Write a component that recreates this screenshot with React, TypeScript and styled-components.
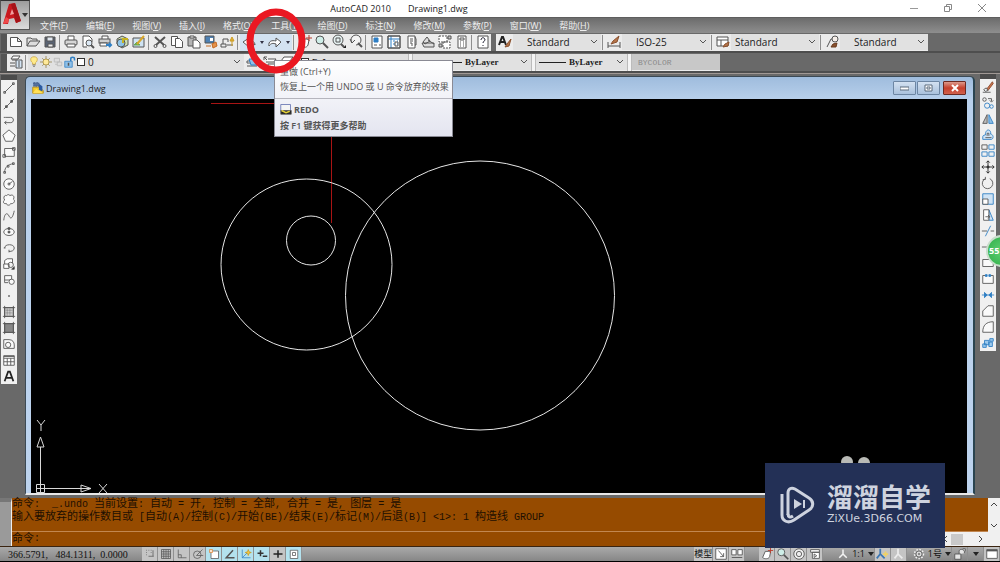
import React, { Fragment, ReactNode } from "react";
import styled, { createGlobalStyle, css } from "styled-components";

const UI_FONT = `"Open Sans", "Noto Sans CJK SC", sans-serif`;
const MONO_FONT = `"Liberation Mono", "Noto Sans CJK SC", monospace`;

const GlobalStyle = createGlobalStyle`
  *, *::before, *::after { box-sizing: border-box; }
  body { margin: 0; background: #000; font-family: ${UI_FONT}; }
  button, select, input { font-family: inherit; margin: 0; padding: 0; border: 0; border-radius: 0; }
  svg { display: block; }
`;

/* ---------- icons ---------- */

const K = "#555";
const B = "#2f7fc4";

const icons: Record<string, ReactNode> = {
  new: <path d="M2.5 3.500h7l4 4v5h-11zM9.500 3.500v4h4" fill="#fff" />,
  open: <path d="M2 12V4h4l1 1h5v2M2 12l3-5h10l-4 5z" fill="#ddd" />,
  save: (
    <>
      <path d="M3 3h10v10H3z" fill="#5a6474" />
      <path d="M5 3h6v4H5z" fill="#dfe6ee" />
      <path d="M6 10h5v3H6z" fill="#eee" />
    </>
  ),
  print: (
    <>
      <path d="M5 6V2h6v4" fill="#fff" />
      <rect x="2" y="6" width="12" height="5" rx="1" fill="#d5d5d5" />
      <path d="M4 10h8v3H4z" fill="#fff" />
    </>
  ),
  preview: (
    <>
      <path d="M3 13V2h6l3 3v3M3 13h4" fill="#fff" />
      <circle cx="9" cy="9" r="3" fill="#dce9f5" />
      <path d="M11 11l3 3" strokeWidth="2" />
    </>
  ),
  publish: (
    <>
      <path d="M5 5V2h6v3" fill="#fff" />
      <rect x="2" y="5" width="11" height="4" fill="#cfcfcf" />
      <path d="M3 9h7v3H3z" fill="#fff" />
      <path d="M9 11h5M12 9l2 2-2 2" stroke={B} strokeWidth="2" />
    </>
  ),
  globe: (
    <>
      <path d="M8 2l6 3v6l-6 3-5-4V5z" fill="#cfe0b0" />
      <circle cx="7" cy="9" r="4" fill="#8fc3e6" />
      <path d="M8 5l6 0M9 5v4" stroke="#c6b21e" strokeWidth="2" />
    </>
  ),
  markup: (
    <>
      <path d="M2 4h11v9H2z" fill="#cfe3f3" />
      <path d="M3 11l3-3 3 3z" fill="#6aa84f" stroke="#6aa84f" />
      <path d="M6 10l7-8" stroke="#d9a72b" strokeWidth="2" />
    </>
  ),
  cut: (
    <>
      <path d="M3 3l9 8M13 3l-9 8" strokeWidth="2" />
      <circle cx="3.5" cy="12" r="1.5" />
      <circle cx="12.5" cy="12" r="1.5" />
    </>
  ),
  copy: (
    <>
      <path d="M2.500 2.500h6v9h-6z" fill="#fff" />
      <path d="M6.500 4.500h4l3 3v6h-7z" fill="#fff" />
    </>
  ),
  paste: (
    <>
      <path d="M2 3h8v9H2z" fill="#b4b4b4" />
      <path d="M4 2h4v2H4z" fill="#fff" />
      <path d="M7 6h4l3 3v5H7z" fill="#fff" />
    </>
  ),
  match: (
    <>
      <path d="M2 2h9v7H2z" fill="#4d81b4" />
      <path d="M7 4h3v3H7z" fill="#fff" stroke="none" />
      <path d="M3 12h5M9 10l4-2 1 4-4 2z" fill="#e5934a" stroke="#c56a21" />
    </>
  ),
  block: (
    <>
      <path d="M3 5h5v3M3 5v5M1 10h5v3H1zM7 11h6" />
      <path d="M12 12V5M10 7l2-4 2 4z" fill="#f3c64b" stroke="#cc9a1e" />
    </>
  ),
  undo: <path d="M14 11c0-3-3-5-6-4V4L2 8l6 5v-3c3-1 5 0 6 1z" fill="#fff" />,
  redo: <path d="M2 12c-1-5 3-6 7-5V4l5 4-5 5v-3c-3-1-5-1-7 2z" fill="#fff" />,
  pan: (
    <>
      <path d="M3 12c2 2 7 2 8-1l1-5-2-1-4 0z" fill="#fff" />
      <path d="M12 1v6M9 4h6" stroke="#b83a2a" />
    </>
  ),
  zoom: (
    <>
      <circle cx="6" cy="6" r="4" fill="#cfeee8" />
      <path d="M9 9l5 5" strokeWidth="2" />
    </>
  ),
  zoomWin: (
    <>
      <circle cx="7" cy="6" r="5" fill="#e6f2f2" />
      <path d="M5 4h4v4H5z" />
      <path d="M10 10l3 3" strokeWidth="2" />
      <path d="M12 14h3v-3z" fill="#222" stroke="none" />
    </>
  ),
  zoomPrev: (
    <>
      <path d="M4 9a5 5 0 1 1 4 2M2 5l2 4 3-3" fill="#f4f4f4" />
      <path d="M10 9l4 4" strokeWidth="2" />
    </>
  ),
  props: (
    <>
      <path d="M3 2h10v12H3z" fill="#fff" />
      <path d="M5 4h4v4H5z" fill={B} stroke={B} />
      <path d="M5 11h3M10 11h2" />
    </>
  ),
  center: (
    <>
      <path d="M2 2h12v12H2z" fill="#fff" />
      <path d="M5 2v12M2 5h12M7 7h2M11 7h1M7 10h2M11 10h1" stroke={B} />
      <path d="M2 2h12v12H2zM9 8h3v4H9z" />
    </>
  ),
  palette: <path d="M5 2h7v12H5zM12 3l1 2v6h-1M7 5h3M7 7h3M7 9h2v3" fill="#fff" />,
  sheet: <path d="M3 8l4-5 3 4-5 3zM2 9h12v4H4zM8 6l6 4" fill="#ddd" />,
  markset: (
    <>
      <path d="M2 2h8v6H2zM6 8h7v6H6z" strokeDasharray="2 1" fill="#fff" />
      <path d="M11 2h3v3h-3zM2 10h3v3H2z" fill="#c9c9c9" />
    </>
  ),
  calc: <path d="M4 2h8v12H4zM6 4h4v2H6zM6 8h1M9 8h1M6 10h1M9 10h1M6 12h1M9 12h1" fill="#fff" />,
  help: (
    <>
      <path d="M3 2h10v12H3z" fill="#fff" />
      <path d="M6 6c0-3 4-3 4 0 0 1-2 1-2 3M8 11v1" stroke="#223" />
    </>
  ),
  textStyle: (
    <>
      <path d="M2 11L5 3h1l3 8M3 8h5" stroke="#222" strokeWidth="2" />
      <path d="M8 13l2-3 4-5-2 7z" fill="#b6754a" stroke="#8a5230" />
    </>
  ),
  dimStyle: (
    <>
      <path d="M2 8v6M14 8v6M2 12h12" />
      <path d="M5 10l2-3 6-5-2 6z" fill="#b6754a" stroke="#8a5230" />
    </>
  ),
  tableStyle: (
    <>
      <path d="M2 3h11v9H2zM2 6h11M6 6v6" fill="#fff" />
      <path d="M8 13l2-3 4-2-1 4z" fill="#b6754a" stroke="#8a5230" />
    </>
  ),
  leaderStyle: (
    <>
      <path d="M3 13l4-8h3" />
      <circle cx="11" cy="5" r="3" fill="#f5eee8" />
      <path d="M7 13l2-3 4-1-1 4z" fill="#8a5230" stroke="#6b3d20" />
    </>
  ),
  layers: (
    <>
      <path d="M5 2h7l-2 3H3zM4 6h4M2 9h5M2 12h5" fill="#fff" />
      <path d="M8 6h6v8H8zM10 8h2M10 10h2M10 12h2" fill="#d5e5f4" />
    </>
  ),
  bulb: (
    <>
      <path d="M8 1c-6 0-5 6-2 8v2h4V9c3-2 4-8-2-8z" fill="#ffeb8a" stroke="#c9a440" />
      <path d="M6 12h4M7 14h2" />
    </>
  ),
  sun: (
    <>
      <path d="M8 0v16M0 8h16M3 3l10 10M13 3L3 13" stroke="#8e7b45" />
      <circle cx="8" cy="8" r="4" fill="#ffe99a" stroke="#a68c3b" />
    </>
  ),
  freeze: <path d="M3 3h7v5H3zM7 8h6v5H7zM4 11h3" stroke="#b5b5b5" fill="#ddd" />,
  lock: (
    <>
      <path d="M9 7V4c0-3 5-3 5 0v2" stroke={B} strokeWidth="2" />
      <path d="M1 7h10v8H1z" fill="#8fc0e8" stroke={B} />
      <path d="M6 9v4" strokeWidth="2" />
    </>
  ),
  layerPrev: (
    <>
      <path d="M2 7h9v2H2zM2 12h10" fill="#fff" />
      <path d="M4 5h9v6H6z" fill="#8fc0e8" stroke={B} />
    </>
  ),
  layerState: <path d="M2 3l3 3M2 6V3h3M6 5h8l-2 3H4M6 10h8v3H6z" fill="#fff" />,
  layerIso: <path d="M5 3h9l-3 4H2zM3 10h7l3-4M3 13h7l4-5" fill="#fff" />,

  line: <path d="M3 13L13 3M2 12h2v2H2zM12 2h2v2h-2z" />,
  xline: <path d="M2 14L14 2M4 10h2v2H4zM10 4h2v2h-2z" fill={K} />,
  pline: <path d="M2 5h2M4 5h6c4 0 4 6 0 6H3M5 9l-2 2 2 2" />,
  polygon: <path d="M8 1l7 6-3 7H4L1 7z" fill="#fafafa" />,
  rect: <path d="M3 4h11v9H3zM1 11h3v3H1zM12 3h3v3h-3z" fill="#fafafa" />,
  arc: <path d="M3 13c0-6 4-9 10-10M2 12h2v2H2zM6 5h2v2H6zM12 2h2v2h-2z" />,
  circle: (
    <>
      <circle cx="8" cy="8" r="6" fill="#fafafa" />
      <path d="M8 8l4-3M7 7h2v2H7z" />
    </>
  ),
  cloud: <path d="M5 3c2-2 4-1 4 0 3-2 6 1 4 4 3 2 0 6-3 5-1 3-5 2-5 0-4 1-4-3-2-4-2-3 0-6 2-5z" fill="#fafafa" />,
  spline: <path d="M2 13c1-9 4-9 6-5s4 3 6-6" />,
  ellipse: (
    <>
      <ellipse cx="8" cy="8" rx="6" ry="4" fill="#fafafa" />
      <path d="M7 7h2v2H7zM7 3h2v2H7z" fill={K} />
    </>
  ),
  ellArc: <path d="M3 8c0-5 11-5 11 0 0 3-3 4-6 4M8 10v3M2 8h2" />,
  insert: (
    <>
      <path d="M3 8V4l3-2h6v5M2 8h6v5H2z" fill="#fff" />
      <circle cx="10" cy="9" r="3" />
      <path d="M11 14h3v-3z" fill="#222" />
    </>
  ),
  makeBlock: (
    <>
      <path d="M3 3h8v5H3zM3 8v3h4" fill="#fafafa" />
      <circle cx="11" cy="10" r="3" fill="#fafafa" />
    </>
  ),
  point: <path d="M7 8h2M8 7v2" />,
  hatch: (
    <>
      <path d="M3 3h10v10H3z" fill="#ccc" />
      <path d="M1 3h14M1 13h14M3 1v14M13 1v14" />
      <path d="M4 6h8M4 9h8M6 4v8M9 4v8" strokeOpacity=".4" />
    </>
  ),
  gradient: (
    <>
      <path d="M3 3h10v10H3z" fill="#888" />
      <path d="M1 3h14M1 13h14M3 1v14M13 1v14" />
    </>
  ),
  region: (
    <>
      <path d="M2 13V3h6c4 0 6 3 6 6v4z" fill="#fafafa" />
      <circle cx="7" cy="9" r="3" />
    </>
  ),
  table: <path d="M2 3h12v11H2zM2 6h12M2 10h12M6 6v8M10 6v8M2 4h12" fill="#fff" />,
  mtext: <path d="M3 14L7 3h2l4 11M5 10h6" stroke="#222" strokeWidth="2" />,

  erase: (
    <>
      <path d="M6 11l7-9 1 2-6 8z" fill="#c9714a" stroke="#8a4a2e" />
      <path d="M3 11l3-2 2 3-3 1zM2 14h9" fill="#eee" />
    </>
  ),
  copyObj: (
    <>
      <circle cx="4" cy="4" r="2" />
      <path d="M8 3h4v3M10 5l2 2 2-2" />
      <circle cx="7" cy="11" r="3" stroke={B} />
      <circle cx="12" cy="12" r="2" stroke={B} />
    </>
  ),
  mirror: (
    <>
      <path d="M7 3v10H2z" fill="#bbb" />
      <path d="M9 3v10h5z" fill="#8fc0e8" stroke={B} />
    </>
  ),
  offset: (
    <>
      <path d="M2 13v-3c0-2 3-2 3-2 0-8 7-7 6-1 3 0 4 5 1 6z" stroke={B} fill="#cfe3f5" />
      <path d="M5 11h7M7 9V6h2v3" />
    </>
  ),
  array: (
    <>
      <path d="M1 1h6v5H1z" />
      <path d="M9 1h6v5H9zM1 9h6v5H1zM9 9h6v5H9z" stroke={B} />
    </>
  ),
  move: <path d="M8 1v14M1 8h14M6 3l2-2 2 2M6 13l2 2 2-2M3 6L1 8l2 2M13 6l2 2-2 2M7 7h2v2H7z" stroke="#222" />,
  rotate: <path d="M5 3a6 6 0 1 0 5 0M5 1v3H2" />,
  scale: (
    <>
      <path d="M2 2h12v12H2z" stroke={B} fill="#cfe3f5" />
      <path d="M2 8h6v6H2z" fill="#fff" />
    </>
  ),
  stretch: (
    <>
      <path d="M9 2l5 12H9z" stroke={B} fill="#cfe3f5" />
      <path d="M3 2h6v12H3zM5 10h5M8 8l2 2-2 2" fill="#fff" />
    </>
  ),
  trim: (
    <>
      <path d="M1 8h6M11 8h4" />
      <path d="M5 14L11 2" stroke={B} />
    </>
  ),
  extend: <path d="M1 8h10M13 2v12" />,
  breakPt: <path d="M2 4h12v8H2z" fill="#fafafa" />,
  breakObj: (
    <>
      <path d="M5 4H2v9h12V4h-3" fill="#fafafa" />
      <path d="M5 3h2v2H5zM9 3h2v2H9z" stroke={B} fill={B} />
    </>
  ),
  join: <path d="M1 8h14M4 5l3 3-3 3zM12 5L9 8l3 3z" stroke={B} fill={B} />,
  chamfer: <path d="M2 14V8l6-6h6v12z" fill="#fafafa" />,
  fillet: <path d="M2 14c0-8 4-12 12-12v12z" fill="#fafafa" />,
  explode: (
    <path d="M4 5h5v5H4zM9 7h4v5H9zM2 9h4v4H2zM10 3h4v3h-4z" stroke={B} fill="#9cc9ec" />
  ),

  snap: <path d="M3 3h1M6 3h1M3 6h1M3 9h1M6 11h7M12 3v8M9 3h1M9 6h1" />,
  grid: <path d="M2 2h12v12H2zM2 5h12M2 8h12M2 11h12M5 2v12M8 2v12M11 2v12" />,
  ortho: <path d="M3 2v11h11M3 9h4v4" />,
  polar: (
    <>
      <circle cx="7" cy="9" r="5" />
      <path d="M6 10l8-8M6 10h9" />
    </>
  ),
  osnap: (
    <>
      <path d="M4 4h10v10H4z" fill="#fff" />
      <path d="M2 2h4v4H2z" stroke="#e08a3c" fill="#fbe3cc" />
    </>
  ),
  track: <path d="M12 3L3 13h11" strokeWidth="2" />,
  ducs: (
    <>
      <path d="M3 2v11h11M3 13l7-7" stroke={B} />
      <path d="M11 2l1 3 3 1-3 1-1 3-1-3-3-1 3-1z" fill="#f4c945" stroke="#c9981b" />
    </>
  ),
  dyn: <path d="M2 7h8M6 3v8M9 11h6" stroke="#333" strokeWidth="2" />,
  lwt: <path d="M2 8h12M8 3v10" stroke="#222" strokeWidth="2" />,
  qp: <path d="M3 3h10v11H3zM6 6h4v4H6z" fill="#fff" />,
  layout1: <path d="M2 2h12v12H2zM5 4l6 7M11 7v4H7" fill="#fff" />,
  layout2: <path d="M2 3h5v6H2zM9 3h5v6H9zM2 12h12" fill="#fff" />,
  wheel: (
    <>
      <circle cx="8" cy="8" r="6" fill="#eee" />
      <circle cx="8" cy="8" r="3" />
    </>
  ),
  motion: <path d="M3 3h10v3H3zM5 6h8v7H5zM7 8l3 2-3 2z" fill="#fff" />,
  figure: <path d="M8 2v6M8 8l-5 5M8 8l5 5M7 3h2" strokeWidth="2" stroke="#f4f4f4" />,
  annoVis: (
    <>
      <path d="M6 2v6M6 8l-4 5M6 8l5 5" strokeWidth="2" stroke="#3b76b3" />
      <path d="M12 5v6M9 8h6" stroke="#f0d264" strokeWidth="2" />
    </>
  ),
  annoAuto: <path d="M8 2v6M8 8l-4 5M8 8l5 5" strokeWidth="2" stroke="#ececec" />,
  gear: (
    <>
      <circle cx="8" cy="8" r="6" strokeDasharray="2 2" strokeWidth="2" stroke="#f2f2f2" />
      <circle cx="8" cy="8" r="4" fill="#ddd" />
      <circle cx="8" cy="8" r="1" />
    </>
  ),
  uiLock: <path d="M2 8h7v6H2zM7 8V5c0-3 5-3 6 0v2M11 2h3v3" fill="#e6e6e6" />,
  clean: (
    <>
      <path d="M2 3h12v10H2z" fill="#fff" />
      <path d="M2 4h12" strokeWidth="2" />
    </>
  ),
  dwg: (
    <>
      <path d="M3 2h6v4H3z" fill="#54709c" stroke="#3a5584" strokeDasharray="2 1" />
      <path d="M2 14V7h8l4 4v3z" fill="#f5cd2d" stroke="#b98c12" />
      <path d="M9 3l4 3v6l-4-2z" fill="#2c5aa0" stroke="none" />
      <path d="M2 14l4-5 8 5z" fill="#ffe15a" stroke="none" />
    </>
  ),
  redoCmd: (
    <>
      <path d="M1 2h13v9H1z" fill="#f4f4f4" stroke="#5566aa" />
      <path d="M1 10h14v5H1z" fill="#222" />
      <path d="M2 10l6 3 5-2" stroke="#e5d23a" strokeWidth="2" />
    </>
  ),
};

const Icon = ({ name, size = 16 }: { name: string; size?: number }) => (
  <svg width={size} height={size} viewBox="0 0 16 16" fill="none" stroke={K} aria-hidden="true">
    {icons[name]}
  </svg>
);

/* ---------- application frame ---------- */

const Frame = styled.div`
  position: relative;
  display: flex;
  flex-direction: column;
  min-height: 100vh;
  overflow: hidden;
  background: #696969;
  color: #222;
  border-bottom: 2px solid #000;
`;

const TitleBar = styled.header`
  display: grid;
  grid-template-columns: 1fr auto 1fr;
  height: 17px;
  padding: 0 8px 0 24px;
  background: #fff;
  font-size: 9px;
  line-height: 17px;
`;

const TitleText = styled.div`
  grid-column: 2;
  display: flex;
  gap: 17px;
  padding-right: 218px;
`;

const WindowControls = styled.div`
  position: absolute;
  top: 0;
  right: 10px;
  display: flex;
  gap: 18px;
`;

const WindowButton = styled.button`
  width: 16px;
  height: 16px;
  background: none;
`;

const LogoButton = styled.button`
  position: absolute;
  top: 0;
  left: 0;
  width: 30px;
  height: 30px;
  background: linear-gradient(#9c9c9c, #dcdcdc);
  border: 1px solid #555;
  border-top-color: #333;
`;

const MenuBar = styled.nav`
  display: flex;
  gap: 18px;
  height: 16px;
  padding-left: 40px;
  background: linear-gradient(#6c6c6c, #8e8e8e);
  border-top: 1px solid #5e5e5e;
`;

const MenuItem = styled.button`
  background: none;
  color: #eee;
  font-size: 9px;
  line-height: 15px;
  white-space: nowrap;
`;

const ToolRow = styled.div`
  display: flex;
  align-items: center;
  height: 20px;
  padding-left: 1px;
  gap: 5px;
  border-bottom: 2px solid #4e4e4e;
`;

const Strip = styled.div<{ $grip?: boolean }>`
  display: flex;
  align-items: center;
  height: 17px;
  background: #ececec;
  border-left: ${(p) => (p.$grip ? "6px solid #555" : "0")};
`;

const ToolButton = styled.button<{ $hot?: boolean }>`
  display: grid;
  place-items: center;
  flex: none;
  width: 17px;
  height: 17px;
  background: ${(p) => (p.$hot ? "#d3e2f1" : "none")};
`;

const DropButton = styled(ToolButton)`
  width: 9px;
`;

const Sep = styled.span`
  flex: none;
  width: 1px;
  height: 15px;
  margin: 0 2px 0 1px;
  background: #8e8e8e;
`;

const PaneGap = styled.span`
  width: 5px;
  height: 17px;
  background: #f4f4f4;
  border: 1px solid #bbb;
  border-width: 0 1px;
`;

const SelectBox = styled.label<{ $w: number; $muted?: boolean }>`
  display: flex;
  align-items: center;
  width: ${(p) => p.$w}px;
  height: 16px;
  padding-right: 3px;
  background: ${(p) => (p.$muted ? "#c8c8c8" : "#e1e1e1")};
`;

const Select = styled.select<{ $pad: number; $serif?: boolean }>`
  appearance: none;
  flex: 1;
  min-width: 0;
  height: 16px;
  padding-left: ${(p) => p.$pad}px;
  background: none;
  color: #222;
  font-size: 10px;
  opacity: 1;
  ${(p) =>
    p.$serif &&
    css`
      font-family: "Liberation Serif", serif;
      font-size: 9px;
      font-weight: 700;
    `}
  &:disabled {
    color: #8a8a8a;
    font-family: "Liberation Mono", monospace;
    font-size: 8px;
    font-weight: 400;
  }
`;

const Swatch = styled.span`
  width: 8px;
  height: 8px;
  margin: 0 0 0 1px;
  background: #fff;
  border: 1px solid #333;
`;

const LinePreview = styled.span<{ $w: number }>`
  width: ${(p) => p.$w}px;
  height: 1px;
  margin-left: 3px;
  background: #222;
`;

const Chevron = () => (
  <svg width="8" height="8" viewBox="0 0 8 8" fill="none" stroke="#555" aria-hidden="true">
    <path d="M1 2l3 3 3-3" />
  </svg>
);

const Caret = () => (
  <svg width="6" height="4" viewBox="0 0 6 4" aria-hidden="true">
    <path d="M0 0h6L3 4z" fill="#222" />
  </svg>
);

const SmallCaret = () => (
  <svg width="4" height="3" viewBox="0 0 4 3" aria-hidden="true">
    <path d="M0 0h4L2 3z" fill="#334" />
  </svg>
);

/* ---------- workspace ---------- */

const Workspace = styled.main`
  display: flex;
  flex: 1;
  align-items: flex-start;
  border-top: 1px solid #a09894;
`;

const Palette = styled.div<{ $right?: boolean }>`
  flex: none;
  width: 16px;
  margin: ${(p) => (p.$right ? "0 4px 0 5px" : "1px 8px 0 1px")};
  padding-top: 5px;
  background: #4b4b4b;
`;

const PaletteButton = styled.button`
  display: grid;
  place-items: center;
  width: 16px;
  height: 16px;
  background: #f0f0f0;
`;

const DocWindow = styled.section`
  display: flex;
  flex: 1;
  flex-direction: column;
  align-self: stretch;
  min-width: 0;
  margin: 2px 0 3px;
  background: linear-gradient(#9fbcdd, #b9d1ec 24px, #bdd3ee);
  border: 1px solid #3c4a55;
  border-right: 2px solid #2a4450;
  border-bottom: 2px solid #e8e8e8;
  border-radius: 5px 5px 0 0;
`;

const DocTitle = styled.div`
  display: flex;
  align-items: center;
  gap: 1px;
  height: 22px;
  padding: 0 7px 0 5px;
  font-size: 9px;
`;

const DocName = styled.span`
  flex: 1;
`;

const DocButton = styled.button<{ $close?: boolean }>`
  display: grid;
  place-items: center;
  width: 23px;
  height: 14px;
  margin-left: ${(p) => (p.$close ? "2px" : "0")};
  background: ${(p) =>
    p.$close ? "linear-gradient(#dd9a8c, #c6402d 50%, #d0614c)" : "linear-gradient(#d3e1f1, #a9c1dc)"};
  border: 1px solid ${(p) => (p.$close ? "#6d2a22" : "#6d86a3")};
  border-radius: 1px;
`;

const Canvas = styled.div`
  position: relative;
  flex: 1;
  min-height: 394px;
  margin: 0 6px 0 5px;
  overflow: hidden;
  background: #000;
`;

const Geometry = styled.svg`
  position: absolute;
  top: 0;
  left: 0;
`;

const UcsIcon = styled.svg`
  position: absolute;
  bottom: 0;
  left: 0;
`;

const Heads = styled.svg`
  position: absolute;
  right: 96px;
  bottom: 26px;
`;

const Badge = styled.div`
  position: absolute;
  top: 235px;
  right: -18px;
  width: 32px;
  height: 32px;
  padding-left: 1px;
  background: radial-gradient(#5fd073, #2fae48);
  border: 2px solid #c8ddcb;
  border-radius: 50%;
  color: #fff;
  font-size: 9px;
  font-weight: 700;
  line-height: 28px;
`;

/* ---------- tooltip ---------- */

const Tooltip = styled.div`
  position: absolute;
  top: 60px;
  left: 274px;
  width: 179px;
  background: linear-gradient(#fff, #e4e5f0);
  border: 1px solid #8a8a94;
  color: #555;
  font-size: 9px;
  line-height: 15px;
  white-space: nowrap;
`;

const TipPart = styled.div<{ $rule?: boolean }>`
  padding: ${(p) => (p.$rule ? "1px 5px 3px" : "3px 5px 4px")};
  border-top: ${(p) => (p.$rule ? "1px solid #b5b5bd" : "0")};
`;

const TipCommand = styled.div`
  display: flex;
  align-items: center;
  gap: 2px;
  height: 18px;
  font-weight: 700;
`;

const TipHelp = styled.div`
  font-weight: 600;
`;

const RedRing = styled.svg`
  position: absolute;
  top: 8px;
  left: 246px;
`;

/* ---------- command line ---------- */

const CommandPane = styled.section`
  display: flex;
  height: 49px;
  border-bottom: 1px solid #3a2410;
`;

const CommandGrip = styled.div`
  width: 12px;
  background: #9a9a9a;
  border-top: 4px solid #777;
  border-right: 1px solid #eee;
`;

const CommandBody = styled.div`
  flex: 1;
  min-width: 0;
  background: #964b00;
  color: #1d0f02;
  font-family: ${MONO_FONT};
  font-size: 10px;
  line-height: 12px;
`;

const History = styled.div`
  height: 34px;
  border-bottom: 1px solid #c28750;
  white-space: pre;
`;

const Han = styled.span`
  font-size: 11px;
`;

const PromptRow = styled.div`
  display: flex;
`;

const Prompt = styled.label`
  display: flex;
  flex: 1;
  align-items: center;
  height: 14px;
  white-space: pre;
`;

const CommandInput = styled.input`
  flex: 1;
  height: 14px;
  background: none;
  color: inherit;
  outline: 0;
`;

const ScrollColumn = styled.div`
  width: 12px;
  background: #f0f0f0;
`;

const ScrollV = styled.div`
  display: flex;
  flex-direction: column;
  justify-content: space-between;
  align-items: center;
  height: 34px;
  padding: 3px 0;
`;

const ScrollH = styled.div`
  display: flex;
  justify-content: space-between;
  align-items: center;
  width: 52px;
  height: 14px;
  padding: 0 4px 0 6px;
  background: #f0f0f0;
`;

const Thumb = styled.span`
  width: 12px;
  height: 11px;
  margin-right: 13px;
  background: #c9c9c9;
`;

const ArrowButton = styled.button`
  width: 8px;
  height: 8px;
  background: none;
`;

const Arrow = ({ d, label }: { d: string; label: string }) => (
  <ArrowButton aria-label={label}>
    <svg width="8" height="8" viewBox="0 0 8 8" fill="none" stroke="#444">
      <path d={d} />
    </svg>
  </ArrowButton>
);

/* ---------- status bar ---------- */

const StatusBar = styled.footer`
  display: flex;
  align-items: center;
  height: 14px;
  background: linear-gradient(#a9a9a9, #868686);
  font-size: 9px;
`;

const Coords = styled.output`
  width: 142px;
  padding-left: 8px;
  color: #111;
  font-family: "Liberation Serif", serif;
  font-size: 10px;
  white-space: pre;
`;

const StatusButton = styled.button<{ $on?: boolean; $light?: boolean }>`
  display: flex;
  align-items: center;
  justify-content: center;
  gap: 3px;
  min-width: 16px;
  height: 14px;
  background: ${(p) => (p.$on ? "#b4e2ee" : p.$light ? "#c4c4c4" : "none")};
  border-right: 1px solid #909090;
  color: #111;
  font-size: 9px;
  line-height: 14px;
  white-space: nowrap;
`;

const StatusGroup = styled.div<{ $gap: number }>`
  display: flex;
  margin-left: ${(p) => p.$gap}px;
`;

const Spacer = styled.div`
  flex: 1;
`;

/* ---------- watermark ---------- */

const Watermark = styled.aside`
  position: absolute;
  right: 55px;
  bottom: 13px;
  display: flex;
  align-items: center;
  gap: 12px;
  width: 180px;
  height: 85px;
  padding: 0 0 2px 14px;
  background: #233056;
  color: #ced3df;
`;

const Brand = styled.div`
  font-family: "Noto Sans CJK SC", sans-serif;
  font-size: 26px;
  font-weight: 700;
  line-height: 26px;
`;

const Site = styled.div`
  margin-top: 3px;
  font-family: "DejaVu Sans", sans-serif;
  font-size: 11px;
  line-height: 14px;
`;

/* ---------- data ---------- */

const menus: [string, string][] = [
  ["文件", "F"], ["编辑", "E"], ["视图", "V"], ["插入", "I"], ["格式", "O"], ["工具", "T"],
  ["绘图", "D"], ["标注", "N"], ["修改", "M"], ["参数", "P"], ["窗口", "W"], ["帮助", "H"],
];

const standardTools = [
  ["new", "open", "save"],
  ["print", "preview", "publish", "globe", "markup"],
  ["cut", "copy", "paste", "match", "block"],
];

const viewTools = [
  ["pan", "zoom", "zoomWin", "zoomPrev"],
  ["props", "center", "palette", "sheet", "markset", "calc"],
  ["help"],
];

const styleSelects: [string, string, string, number][] = [
  ["textStyle", "Standard", "文字样式", 14],
  ["dimStyle", "ISO-25", "标注样式", 14],
  ["tableStyle", "Standard", "表格样式", 4],
  ["leaderStyle", "Standard", "多重引线样式", 14],
];

const drawTools = [
  "line", "xline", "pline", "polygon", "rect", "arc", "circle", "cloud", "spline", "ellipse",
  "ellArc", "insert", "makeBlock", "point", "hatch", "gradient", "region", "table", "mtext",
];

const modifyTools = [
  "erase", "copyObj", "mirror", "offset", "array", "move", "rotate", "scale", "stretch",
  "trim", "extend", "breakPt", "breakObj", "join", "chamfer", "fillet", "explode",
];

const toggles: [string, boolean][] = [
  ["snap", false], ["grid", false], ["ortho", false], ["polar", false], ["osnap", true],
  ["track", true], ["ducs", true], ["dyn", true], ["lwt", false], ["qp", true],
];

const history = [
  "命令:  _.undo 当前设置: 自动 = 开, 控制 = 全部, 合并 = 是, 图层 = 是",
  "输入要放弃的操作数目或 [自动(A)/控制(C)/开始(BE)/结束(E)/标记(M)/后退(B)] <1>: 1 构造线 GROUP",
];

const MixedText = ({ text }: { text: string }) => (
  <>
    {text.split(/([\u4e00-\u9fff]+)/).map((run, i) =>
      i % 2 ? <Han key={i}>{run}</Han> : <Fragment key={i}>{run}</Fragment>
    )}
  </>
);

const ToolGroups = ({ groups }: { groups: string[][] }) => (
  <>
    {groups.map((group, i) => (
      <Fragment key={i}>
        {i > 0 && <Sep />}
        {group.map((name) => (
          <ToolButton key={name} aria-label={name}>
            <Icon name={name} />
          </ToolButton>
        ))}
      </Fragment>
    ))}
  </>
);

const ToolPalette = ({ tools, right }: { tools: string[]; right?: boolean }) => (
  <Palette $right={right}>
    {tools.map((name) => (
      <PaletteButton key={name} aria-label={name}>
        <Icon name={name} size={14} />
      </PaletteButton>
    ))}
  </Palette>
);

/* ---------- app ---------- */

export default function App() {
  return (
    <Frame>
      <GlobalStyle />
      <TitleBar>
        <TitleText>
          <span>AutoCAD 2010</span>
          <span>Drawing1.dwg</span>
        </TitleText>
        <WindowControls>
          <WindowButton aria-label="最小化">
            <svg width="16" height="16" stroke="#999"><path d="M4 8.500h8" /></svg>
          </WindowButton>
          <WindowButton aria-label="还原">
            <svg width="16" height="16" fill="none" stroke="#888">
              <path d="M4.500 6.500h5v5h-5zM6.500 6V4.500h5v5H10" />
            </svg>
          </WindowButton>
          <WindowButton aria-label="关闭">
            <svg width="16" height="16" stroke="#888"><path d="M4 4l8 8M12 4l-8 8" /></svg>
          </WindowButton>
        </WindowControls>
      </TitleBar>

      <MenuBar>
        {menus.map(([label, key]) => (
          <MenuItem key={key}>
            {label}(<u>{key}</u>)
          </MenuItem>
        ))}
      </MenuBar>

      <ToolRow>
        <Strip $grip>
          <ToolGroups groups={standardTools} />
          <Sep />
          <ToolButton $hot aria-label="放弃"><Icon name="undo" /></ToolButton>
          <DropButton $hot aria-label="放弃列表"><SmallCaret /></DropButton>
          <ToolButton $hot aria-label="重做"><Icon name="redo" /></ToolButton>
          <DropButton $hot aria-label="重做列表"><SmallCaret /></DropButton>
          <Sep />
          <ToolGroups groups={viewTools} />
        </Strip>
        <Strip>
          {styleSelects.map(([icon, value, label, pad], i) => (
            <Fragment key={label}>
              {i > 0 && <Sep />}
              <ToolButton aria-label={label}><Icon name={icon} /></ToolButton>
              <SelectBox $w={88}>
                <Select $pad={pad} aria-label={label} defaultValue={value}>
                  <option>{value}</option>
                </Select>
                <Chevron />
              </SelectBox>
            </Fragment>
          ))}
        </Strip>
      </ToolRow>

      <ToolRow>
        <Strip $grip>
          <ToolButton aria-label="图层特性"><Icon name="layers" /></ToolButton>
          <Sep />
          <SelectBox $w={216}>
            <Icon name="bulb" size={12} />
            <Icon name="sun" size={12} />
            <Icon name="freeze" size={12} />
            <Icon name="lock" size={12} />
            <Swatch />
            <Select $pad={3} aria-label="图层" defaultValue="0">
              <option>0</option>
            </Select>
            <Chevron />
          </SelectBox>
          <ToolButton aria-label="图层置为当前"><Icon name="layerPrev" /></ToolButton>
          <ToolButton aria-label="上一个图层"><Icon name="layerState" /></ToolButton>
          <ToolButton aria-label="图层状态"><Icon name="layerIso" /></ToolButton>
        </Strip>
        <Strip>
          <SelectBox $w={108}>
            <Swatch />
            <Select $pad={3} $serif aria-label="颜色" defaultValue="ByLayer">
              <option>ByLayer</option>
            </Select>
            <Chevron />
          </SelectBox>
          <PaneGap />
          <SelectBox $w={118}>
            <LinePreview $w={46} />
            <Select $pad={3} $serif aria-label="线型" defaultValue="ByLayer">
              <option>ByLayer</option>
            </Select>
            <Chevron />
          </SelectBox>
          <PaneGap />
          <SelectBox $w={91}>
            <LinePreview $w={27} />
            <Select $pad={3} $serif aria-label="线宽" defaultValue="ByLayer">
              <option>ByLayer</option>
            </Select>
            <Chevron />
          </SelectBox>
          <PaneGap />
          <SelectBox $w={88} $muted>
            <Select $pad={6} $serif disabled aria-label="打印样式" defaultValue="BYCOLOR">
              <option>BYCOLOR</option>
            </Select>
          </SelectBox>
        </Strip>
      </ToolRow>

      <Workspace>
        <ToolPalette tools={drawTools} />

        <DocWindow>
          <DocTitle>
            <Icon name="dwg" size={14} />
            <DocName>Drawing1.dwg</DocName>
            <DocButton aria-label="最小化">
              <svg width="9" height="6"><path d="M0 2h9v3H0z" fill="#fff" stroke="#5a6b7d" /></svg>
            </DocButton>
            <DocButton aria-label="最大化">
              <svg width="9" height="8"><path d="M1 1h7v6H1zM3 3h3v2H3z" fill="#fff" stroke="#5a6b7d" /></svg>
            </DocButton>
            <DocButton $close aria-label="关闭">
              <svg width="8" height="8"><path d="M1 1l6 6M7 1L1 7" stroke="#fff" strokeWidth="2" /></svg>
            </DocButton>
          </DocTitle>
          <Canvas>
            <Geometry width="600" height="340" fill="none" stroke="#e6e6e6">
              <path d="M180 4.500H300.500V124" stroke="#a81414" />
              <circle cx="275.5" cy="165.5" r="85.5" />
              <circle cx="280" cy="141.5" r="24.5" />
              <circle cx="449" cy="196.5" r="134.5" />
            </Geometry>
            <UcsIcon width="90" height="80" fill="none" stroke="#d8d8d8">
              <path d="M5.500 71.500h8v8h-8zM5.500 75.500h8M9.500 34v45.500M9.500 75.500h50M6 34h7l-3.500-10zM50 72v7l10-3.500z" />
              <path d="M6 7l4 5 4-5M10 12v6M68 71l8 9M76 71l-8 9" />
            </UcsIcon>
            <Heads width="32" height="12">
              <circle cx="8" cy="7" r="6" fill="#b9bab6" />
              <circle cx="25" cy="8" r="6" fill="#b9bab6" />
            </Heads>
          </Canvas>
        </DocWindow>

        <ToolPalette tools={modifyTools} right />
      </Workspace>

      <CommandPane>
        <CommandGrip />
        <CommandBody>
          <History>
            {history.map((line) => (
              <div key={line}><MixedText text={line} /></div>
            ))}
          </History>
          <PromptRow>
            <Prompt>
              <MixedText text="命令: " />
              <CommandInput />
            </Prompt>
            <ScrollH>
              <Arrow d="M5 1L2 4l3 3" label="向左滚动" />
              <Thumb />
              <Arrow d="M3 1l3 3-3 3" label="向右滚动" />
            </ScrollH>
          </PromptRow>
        </CommandBody>
        <ScrollColumn>
          <ScrollV>
            <Arrow d="M1 5l3-3 3 3" label="向上滚动" />
            <Arrow d="M1 3l3 3 3-3" label="向下滚动" />
          </ScrollV>
        </ScrollColumn>
      </CommandPane>

      <StatusBar>
        <Coords>366.5791,   484.1311,  0.0000</Coords>
        {toggles.map(([name, on]) => (
          <StatusButton key={name} $on={on} $light aria-label={name} aria-pressed={on}>
            <Icon name={name} size={12} />
          </StatusButton>
        ))}
        <Spacer />
        <StatusGroup $gap={0}>
          <StatusButton $light>模型</StatusButton>
          <StatusButton $light aria-label="布局1"><Icon name="layout1" size={14} /></StatusButton>
          <StatusButton $light aria-label="布局2"><Icon name="layout2" size={14} /></StatusButton>
        </StatusGroup>
        <StatusGroup $gap={14}>
          <StatusButton $light aria-label="平移"><Icon name="pan" size={14} /></StatusButton>
          <StatusButton $light aria-label="缩放"><Icon name="zoom" size={14} /></StatusButton>
          <StatusButton $light aria-label="控制盘"><Icon name="wheel" size={14} /></StatusButton>
          <StatusButton $light aria-label="运动"><Icon name="motion" size={14} /></StatusButton>
        </StatusGroup>
        <StatusGroup $gap={14}>
          <StatusButton><Icon name="figure" size={12} />1:1<Caret /></StatusButton>
          <StatusButton $light aria-label="注释可见性"><Icon name="annoVis" size={14} /></StatusButton>
          <StatusButton $light aria-label="自动缩放"><Icon name="annoAuto" size={14} /></StatusButton>
        </StatusGroup>
        <StatusGroup $gap={6}>
          <StatusButton><Icon name="gear" size={12} />1号<Caret /></StatusButton>
          <StatusButton aria-label="锁定"><Icon name="uiLock" size={14} /></StatusButton>
          <StatusButton aria-label="菜单"><Caret /></StatusButton>
          <StatusButton $light aria-label="全屏"><Icon name="clean" size={14} /></StatusButton>
        </StatusGroup>
      </StatusBar>

      <LogoButton aria-label="应用程序菜单">
        <svg width="28" height="28" viewBox="0 0 28 28">
          <path d="M2 23L8 3l6-1 6 18-5 2-2-5-5 1-1 5z" fill="#c8191f" />
          <path d="M10 3l4-1 6 18-5 2z" fill="#a51318" />
          <path d="M9 14l2-6 2 5z" fill="#f0a0a0" />
          <path d="M2 23l5-1 1-4-3-2z" fill="#ee4a4a" />
          <path d="M21 12h6l-3 4z" fill="#333" />
        </svg>
      </LogoButton>

      <Badge>55</Badge>

      <Tooltip role="tooltip">
        <TipPart>
          <div>重做 (Ctrl+Y)</div>
          <div>恢复上一个用 UNDO 或 U 命令放弃的效果</div>
        </TipPart>
        <TipPart $rule>
          <TipCommand><Icon name="redoCmd" size={12} />REDO</TipCommand>
          <TipHelp>按 F1 键获得更多帮助</TipHelp>
        </TipPart>
      </Tooltip>

      <RedRing width="60" height="66" fill="none">
        <ellipse cx="30" cy="33" rx="26" ry="29" stroke="#ea1822" strokeWidth="7" />
      </RedRing>

      <Watermark>
        <svg width="36" height="38" viewBox="0 0 36 38" fill="none" stroke="#ced3df" strokeWidth="3">
          <path d="M9 29V7c0-4 3-6 7-4l14 9c5 3 5 9 0 12L15 34c-6 4-12 1-12-5V8" />
          <path d="M9 28c0 3 2 4 5 2" />
          <path d="M15 13l8 5-8 5z" fill="#ced3df" stroke="none" />
          <path d="M25 14v8" strokeWidth="2" />
        </svg>
        <div>
          <Brand>溜溜自学</Brand>
          <Site>ZiXUe.3D66.COM</Site>
        </div>
      </Watermark>
    </Frame>
  );
}
